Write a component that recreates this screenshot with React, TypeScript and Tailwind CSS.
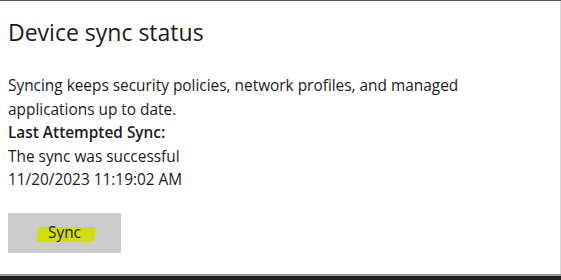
export default function App() {
  return (
    <div className="w-[561px] h-[280px] bg-white flex flex-col overflow-hidden" style={{ fontFamily: '"Open Sans", "Noto Sans", sans-serif' }}>
      <div className="h-px bg-[#555]" />
      <div className="flex-1 flex border-r border-[#d9d9d9]">
        <div className="flex flex-col pl-[8px] text-[#1b1b1b]">
          <h1 className="text-[23px] leading-[30px] mt-[16px]">Device sync status</h1>
          <div className="mt-[27px] text-[15.4px] leading-[23.5px]">
            <p>Syncing keeps security policies, network profiles, and managed<br />applications up to date.</p>
            <p className="font-semibold">Last Attempted Sync:</p>
            <p>The sync was successful</p>
            <p>11/20/2023 11:19:02 AM</p>
          </div>
          <button className="mt-[21px] w-[113px] h-[40px] bg-[#cccccc] flex items-center justify-center relative">
            <span className="absolute left-[29px] top-[14px] w-[58px] h-[15px] bg-[#d2dc10] rounded-[2px] -skew-x-6" />
            <span className="relative text-[15.4px] text-[#1b1b1b]">Sync</span>
          </button>
        </div>
      </div>
      <div className="h-[2px] bg-[#9a9a9a]" />
      <div className="h-[4px] bg-[#202020]" />
    </div>
  );
}
